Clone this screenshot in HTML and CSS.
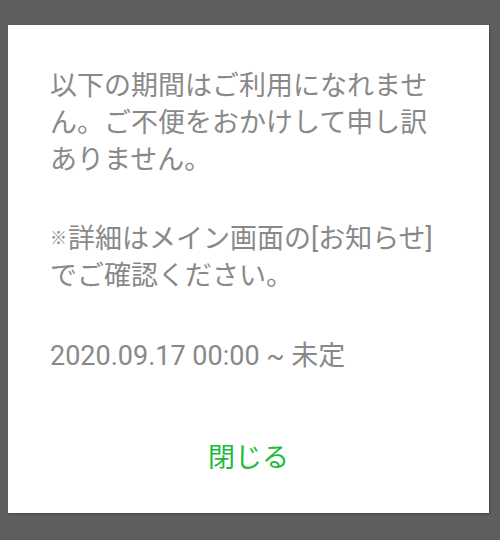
FILE: index.html
```html
<!DOCTYPE html>
<html lang="ja">
<head>
<meta charset="utf-8">
<link rel="stylesheet" href="styles.css">
</head>
<body>
<div class="dialog">
  <div class="content">
    <p class="msg">以下の期間はご利用になれません。ご不便をおかけして申し訳ありません。</p>
    <p class="msg second"><span class="mark">※</span>詳細はメイン画面の[お知らせ]でご確認ください。</p>
    <p class="msg third">2020.09.17 00:00 ~ 未定</p>
  </div>
  <div class="actions">
    <span class="close">閉じる</span>
  </div>
</div>
</body>
</html>
```
FILE: styles.css
```css
html, body {
  margin: 0;
  padding: 0;
  background: #5e5e5e;
  width: 500px;
  height: 540px;
  overflow: hidden;
}
body {
  font-family: "Roboto", "Noto Sans CJK JP", sans-serif;
}
.dialog {
  margin: 25px 11px 0 8px;
  height: 488px;
  background: #ffffff;
  box-shadow: 1px 1px 2px rgba(0,0,0,0.25);
  display: flex;
  flex-direction: column;
}
.content {
  padding: 43px 42px 0 42px;
  flex: 1;
}
.msg {
  margin: 0;
  font-size: 27px;
  line-height: 37px;
  color: #898989;
}
.mark {
  display: inline-block;
  font-family: "Noto Sans CJK JP", sans-serif;
  font-size: 17px;
  line-height: 17px;
  vertical-align: 4px;
  margin-right: 1px;
}
.second {
  margin-top: 42px;
}
.third {
  margin-top: 43px;
}
.actions {
  display: flex;
  justify-content: center;
  padding-bottom: 36px;
}
.close {
  font-size: 27px;
  line-height: 37px;
  color: #1dbb3a;
}
```
